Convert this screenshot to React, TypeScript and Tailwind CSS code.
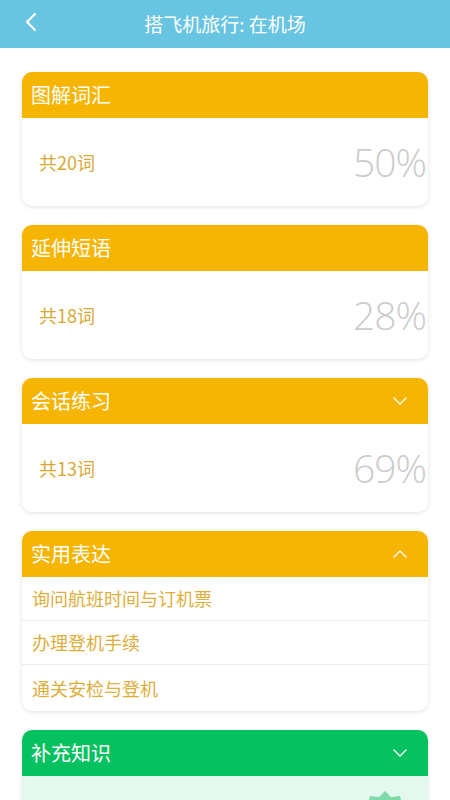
import { ChevronDown, ChevronLeft, ChevronUp } from 'lucide-react'

const font = { fontFamily: '"Noto Sans CJK SC", "Noto Sans", sans-serif' }

interface StatCardProps {
    title: string
    count: number
    percent: string
    chevron?: boolean
}

function StatCard({ title, count, percent, chevron }: StatCardProps) {
    return (
        <div className="rounded-[10px] bg-white shadow-[0_1px_4px_rgba(0,0,0,0.12)] overflow-hidden">
            <div className="flex h-[46px] items-center justify-between bg-[#F6B503] pl-[9px] pr-[16px]">
                <span className="text-[20px] text-white">{title}</span>
                {chevron && <ChevronDown className="h-[24px] w-[24px] text-white" strokeWidth={1.3} />}
            </div>
            <div className="flex h-[88px] items-center justify-between pl-[17px] pr-[2px]">
                <span className="text-[18px] text-[#D7A935]">共{count}词</span>
                <span className="text-[39px] font-light text-[#CCCCCC] tracking-tight" style={{ fontFamily: '"Open Sans", sans-serif' }}>{percent}</span>
            </div>
        </div>
    )
}

export default function App() {
    const phrases = ['询问航班时间与订机票', '办理登机手续', '通关安检与登机']

    return (
        <div className="h-[800px] w-[450px] overflow-hidden bg-white" style={font}>
            {/* Top bar */}
            <div className="relative flex h-[48px] items-center justify-center bg-[#67C5E2]">
                <ChevronLeft className="absolute left-[15px] top-[6px] h-[32px] w-[32px] text-white" strokeWidth={1.6} />
                <span className="text-[19px] text-white">搭飞机旅行: 在机场</span>
            </div>

            <div className="flex flex-col gap-[19px] px-[22px] pt-[24px]">
                <StatCard title="图解词汇" count={20} percent="50%" />
                <StatCard title="延伸短语" count={18} percent="28%" />
                <StatCard title="会话练习" count={13} percent="69%" chevron />

                <div className="rounded-[10px] bg-white shadow-[0_1px_4px_rgba(0,0,0,0.12)] overflow-hidden">
                    <div className="flex h-[46px] items-center justify-between bg-[#F6B503] pl-[9px] pr-[16px]">
                        <span className="text-[20px] text-white">实用表达</span>
                        <ChevronUp className="h-[24px] w-[24px] text-white" strokeWidth={1.3} />
                    </div>
                    {phrases.map((p, i) => (
                        <div
                            key={p}
                            className={
                                i < phrases.length - 1
                                    ? 'flex h-[44px] items-center border-b border-[#EBEBEB] pl-[10px] text-[18px] text-[#DDAE3A]'
                                    : 'flex h-[46px] items-center pl-[10px] text-[18px] text-[#DDAE3A]'
                            }
                        >
                            {p}
                        </div>
                    ))}
                </div>

                <div className="rounded-[10px] bg-white shadow-[0_1px_4px_rgba(0,0,0,0.12)] overflow-hidden">
                    <div className="flex h-[46px] items-center justify-between bg-[#06C160] pl-[9px] pr-[16px]">
                        <span className="text-[20px] text-white">补充知识</span>
                        <ChevronDown className="h-[24px] w-[24px] text-white" strokeWidth={1.3} />
                    </div>
                    <div className="flex h-[88px] justify-end bg-[#E3F8EE] pr-[18px] pt-[15px]">
                        <svg width="50" height="50" viewBox="0 0 50 50">
                            <path d="M25 0 L31 6 L40 5 L42 13 L50 18 L46 26 L50 34 L42 38 L40 46 L31 45 L25 50 L19 45 L10 46 L8 38 L0 34 L4 26 L0 18 L8 13 L10 5 L19 6 Z" fill="#7FD9A8" />
                        </svg>
                    </div>
                </div>
            </div>
        </div>
    )
}
